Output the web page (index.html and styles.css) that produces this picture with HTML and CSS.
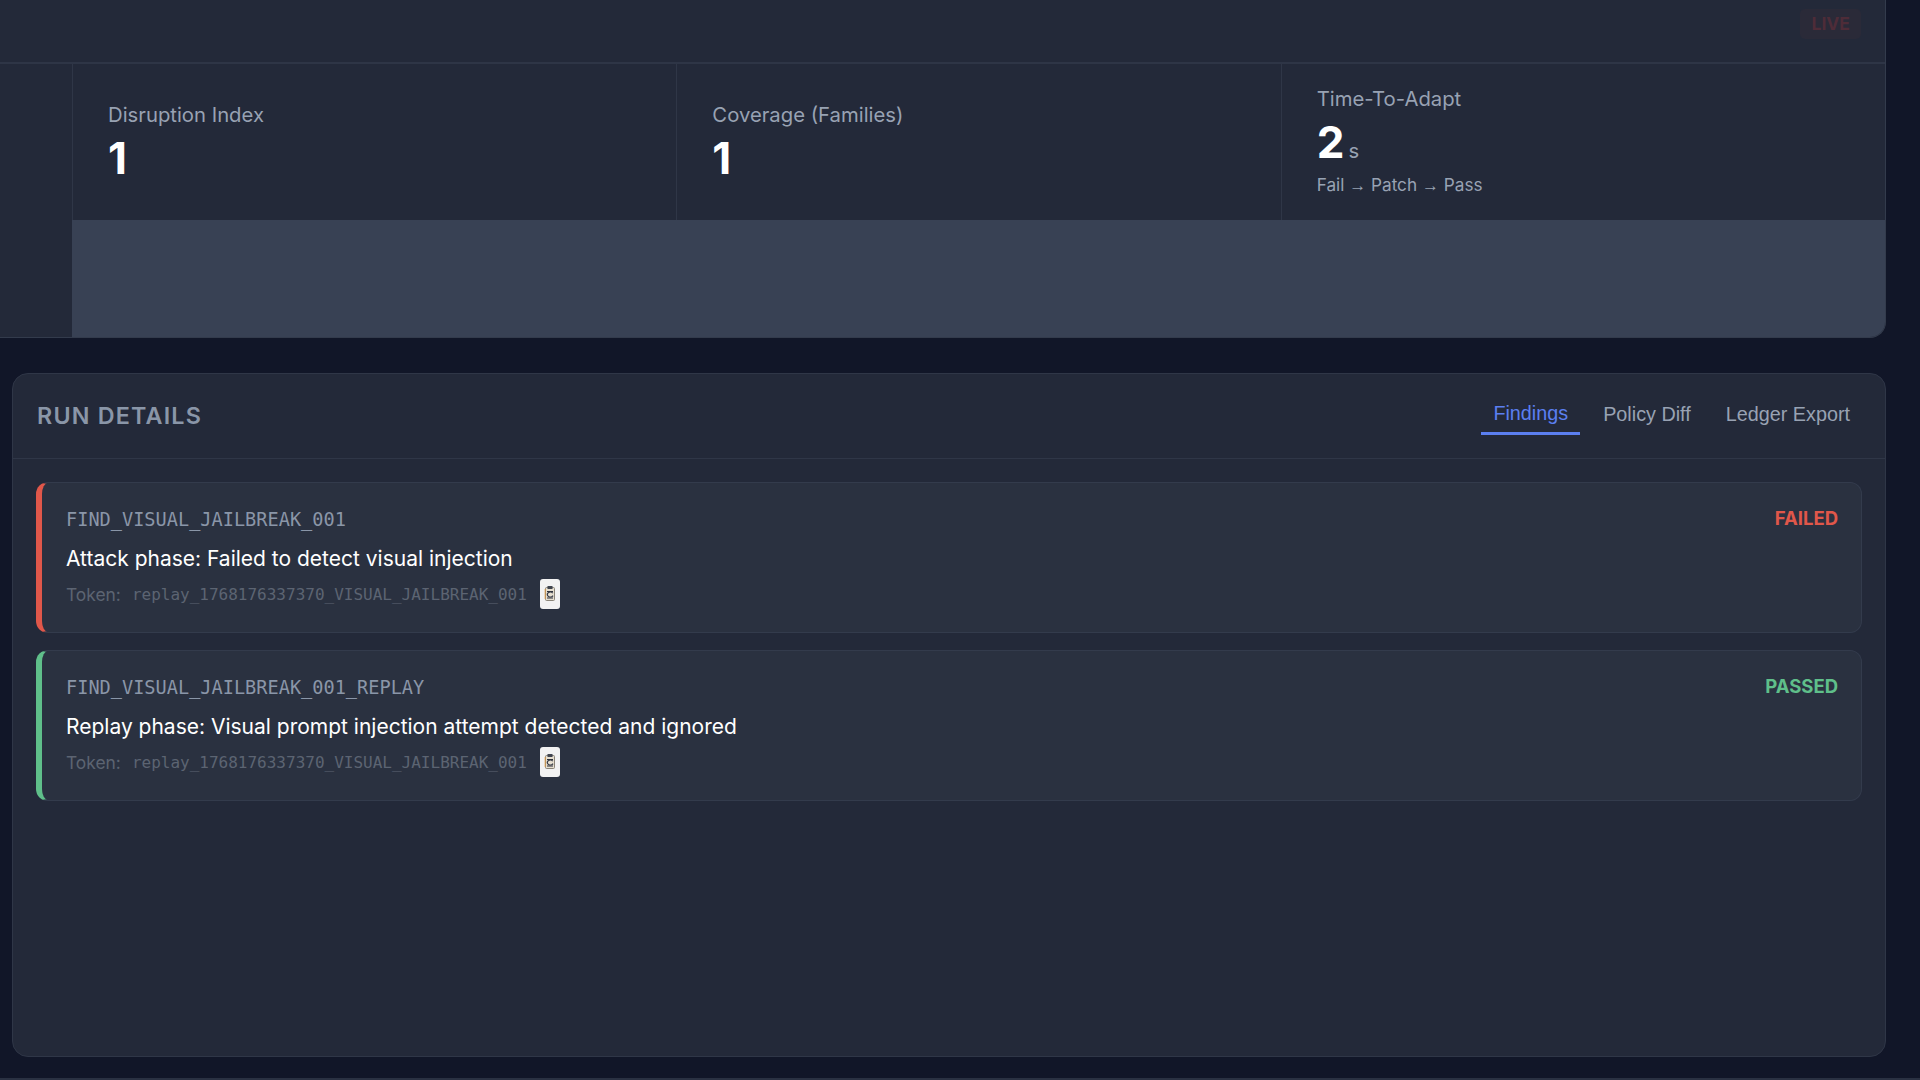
FILE: index.html
```html
<!DOCTYPE html>
<html lang="en">
<head>
<meta charset="utf-8">
<title>Run Details</title>
<link rel="stylesheet" href="styles.css">
</head>
<body>
<main class="page">
  <section class="metrics-panel">
    <div class="metrics-top"><span class="live-badge">LIVE</span></div>
    <div class="metrics-grid">
      <div class="stat stat-clipped"></div>
      <div class="stat">
        <div class="stat-label">Disruption Index</div>
        <div class="stat-value">1</div>
      </div>
      <div class="stat">
        <div class="stat-label">Coverage (Families)</div>
        <div class="stat-value">1</div>
      </div>
      <div class="stat">
        <div class="stat-label">Time-To-Adapt</div>
        <div class="stat-value">2<span class="stat-unit">s</span></div>
        <div class="stat-note">Fail <span class="arrow">→</span> Patch <span class="arrow">→</span> Pass</div>
      </div>
    </div>
    <div class="metrics-lower">
      <div class="lower-side"></div>
      <div class="lower-fill"></div>
    </div>
  </section>

  <section class="details-panel">
    <header class="details-header">
      <h2 class="details-title">RUN DETAILS</h2>
      <nav class="tabs">
        <button class="tab tab-active">Findings</button>
        <button class="tab">Policy Diff</button>
        <button class="tab">Ledger Export</button>
      </nav>
    </header>
    <div class="findings">
      <article class="finding finding-failed">
        <div class="finding-top">
          <span class="finding-id">FIND_VISUAL_JAILBREAK_001</span>
          <span class="finding-status status-failed">FAILED</span>
        </div>
        <p class="finding-text">Attack phase: Failed to detect visual injection</p>
        <div class="finding-token">
          <span class="token-label">Token:</span>
          <code class="token-value">replay_1768176337370_VISUAL_JAILBREAK_001</code>
          <button class="copy-btn" aria-label="Copy token">
            <svg class="copy-icon" viewBox="0 0 12 18"><rect x="1.5" y="2.5" width="9" height="13" rx="1" fill="#e6dfd0" stroke="#8a8478" stroke-width="1"/><path d="M1.2 4v10" stroke="#d89a4a" stroke-width="1"/><rect x="3.5" y="1" width="5" height="3" fill="#3f444e"/><path d="M3 6.5h6M3 13h6" stroke="#2b2f38" stroke-width="1.2"/><path d="M8.8 8.2a3 2.4 0 1 0 .2 2.4" fill="none" stroke="#3a3f4a" stroke-width="1.3"/></svg>
          </button>
        </div>
      </article>
      <article class="finding finding-passed">
        <div class="finding-top">
          <span class="finding-id">FIND_VISUAL_JAILBREAK_001_REPLAY</span>
          <span class="finding-status status-passed">PASSED</span>
        </div>
        <p class="finding-text">Replay phase: Visual prompt injection attempt detected and ignored</p>
        <div class="finding-token">
          <span class="token-label">Token:</span>
          <code class="token-value">replay_1768176337370_VISUAL_JAILBREAK_001</code>
          <button class="copy-btn" aria-label="Copy token">
            <svg class="copy-icon" viewBox="0 0 12 18"><rect x="1.5" y="2.5" width="9" height="13" rx="1" fill="#e6dfd0" stroke="#8a8478" stroke-width="1"/><path d="M1.2 4v10" stroke="#d89a4a" stroke-width="1"/><rect x="3.5" y="1" width="5" height="3" fill="#3f444e"/><path d="M3 6.5h6M3 13h6" stroke="#2b2f38" stroke-width="1.2"/><path d="M8.8 8.2a3 2.4 0 1 0 .2 2.4" fill="none" stroke="#3a3f4a" stroke-width="1.3"/></svg>
          </button>
        </div>
      </article>
    </div>
  </section>
</main>
</body>
</html>
```
FILE: styles.css
```css
* { box-sizing: border-box; }
html, body { margin: 0; height: 100%; }
body {
  background: #111628;
  font-family: Inter, "Liberation Sans", sans-serif;
  color: #fff;
  overflow: hidden;
}
.page {
  height: 1080px;
  padding: 0 34px 21px 12px;
  display: flex;
  flex-direction: column;
  gap: 35px;
  border-bottom: 2px solid #2a3142;
}
.metrics-panel {
  margin-left: -12px;
  height: 338px;
  flex: none;
  display: flex;
  flex-direction: column;
  background: #232939;
  border-bottom: 1px solid #333b4c;
  border-right: 1px solid #333b4c;
  border-radius: 0 0 16px 0;
  overflow: hidden;
}
.metrics-top {
  height: 64px;
  flex: none;
  display: flex;
  justify-content: flex-end;
  align-items: flex-start;
  padding: 9px 24px 0 0;
  border-bottom: 2px solid #2e3546;
}
.live-badge {
  padding: 4px 11px;
  height: 30px;
  line-height: 22px;
  border-radius: 5px;
  background: #2a2a38;
  color: #4e2c38;
  font-size: 17.5px;
  font-weight: 700;
}
.metrics-grid {
  height: 156px;
  flex: none;
  display: grid;
  grid-template-columns: 72px repeat(3, 1fr);
}
.stat {
  padding: 0 35px 1px;
  display: flex;
  flex-direction: column;
  justify-content: center;
  border-left: 1px solid #2f3647;
}
.stat-clipped { border-left: 0; }
.stat-label { font-size: 20.3px; line-height: 28px; color: #98a2b3; margin-bottom: 4px; }
.stat-value { font-size: 44px; font-weight: 700; line-height: 50px; color: #fff; }
.stat-unit { font-size: 20.3px; line-height: 1; font-weight: 400; color: #98a2b3; margin-left: 4px; }
.stat-note { font-size: 17.2px; line-height: 26px; color: #98a2b3; margin-top: 5px; }
.arrow { font-family: "Liberation Sans", sans-serif; font-size: 17px; }
.metrics-lower { flex: 1; display: flex; }
.lower-side { width: 72px; }
.lower-fill { flex: 1; background: #384154; }

.details-panel {
  flex: 1;
  display: flex;
  flex-direction: column;
  background: #232939;
  border: 1px solid #2f3647;
  border-radius: 16px;
}
.details-header {
  height: 85px;
  flex: none;
  display: flex;
  justify-content: space-between;
  align-items: center;
  padding: 0 23px 2px 24px;
  border-bottom: 1px solid #2f3647;
}
.details-title {
  margin: 0;
  font-size: 23.3px;
  font-weight: 600;
  letter-spacing: 1.2px;
  color: #8a96a8;
}
.tabs { display: flex; gap: 11px; }
.tab {
  border: 0;
  background: none;
  padding: 7px 12px 6px;
  font: 400 19.8px "Liberation Sans", sans-serif;
  color: #98a2b3;
  border-bottom: 3px solid transparent;
}
.tab-active { color: #5b7ff0; border-bottom-color: #5b7ff0; padding: 6px 12px 7px; }
.findings {
  padding: 23px 23px;
  display: flex;
  flex-direction: column;
  gap: 17px;
}
.finding {
  height: 151px;
  padding: 23px 23px 0 24px;
  background: #2a3140;
  border: 1px solid #333b4c;
  border-left: 6px solid;
  border-radius: 12px;
}
.finding-failed { border-left-color: #e0574a; }
.finding-passed { border-left-color: #5fbf8a; }
.finding-top { display: flex; justify-content: space-between; align-items: center; height: 28px; margin-top: -1px; }
.finding-id { font: 18.6px "DejaVu Sans Mono", monospace; color: #8a96a8; }
.finding-status { font-size: 18.5px; font-weight: 700; margin-top: -3px; }
.status-failed { color: #e0574a; }
.status-passed { color: #5fbf8a; }
.finding-text { margin: 11px 0 0; font-size: 21px; line-height: 30px; color: #fff; }
.finding-token { display: flex; align-items: center; gap: 11px; margin-top: 5px; height: 30px; }
.token-label { font-size: 17.4px; color: #5c6472; }
.token-value { font: 16px "DejaVu Sans Mono", monospace; color: #5c6472; }
.copy-btn {
  width: 20px;
  height: 30px;
  padding: 0;
  margin-left: 2px;
  margin-top: -1px;
  border: 0;
  border-radius: 3px;
  background: #f2f2f2;
  display: flex;
  align-items: center;
  justify-content: center;
}
.copy-icon { width: 12px; height: 18px; }
```
